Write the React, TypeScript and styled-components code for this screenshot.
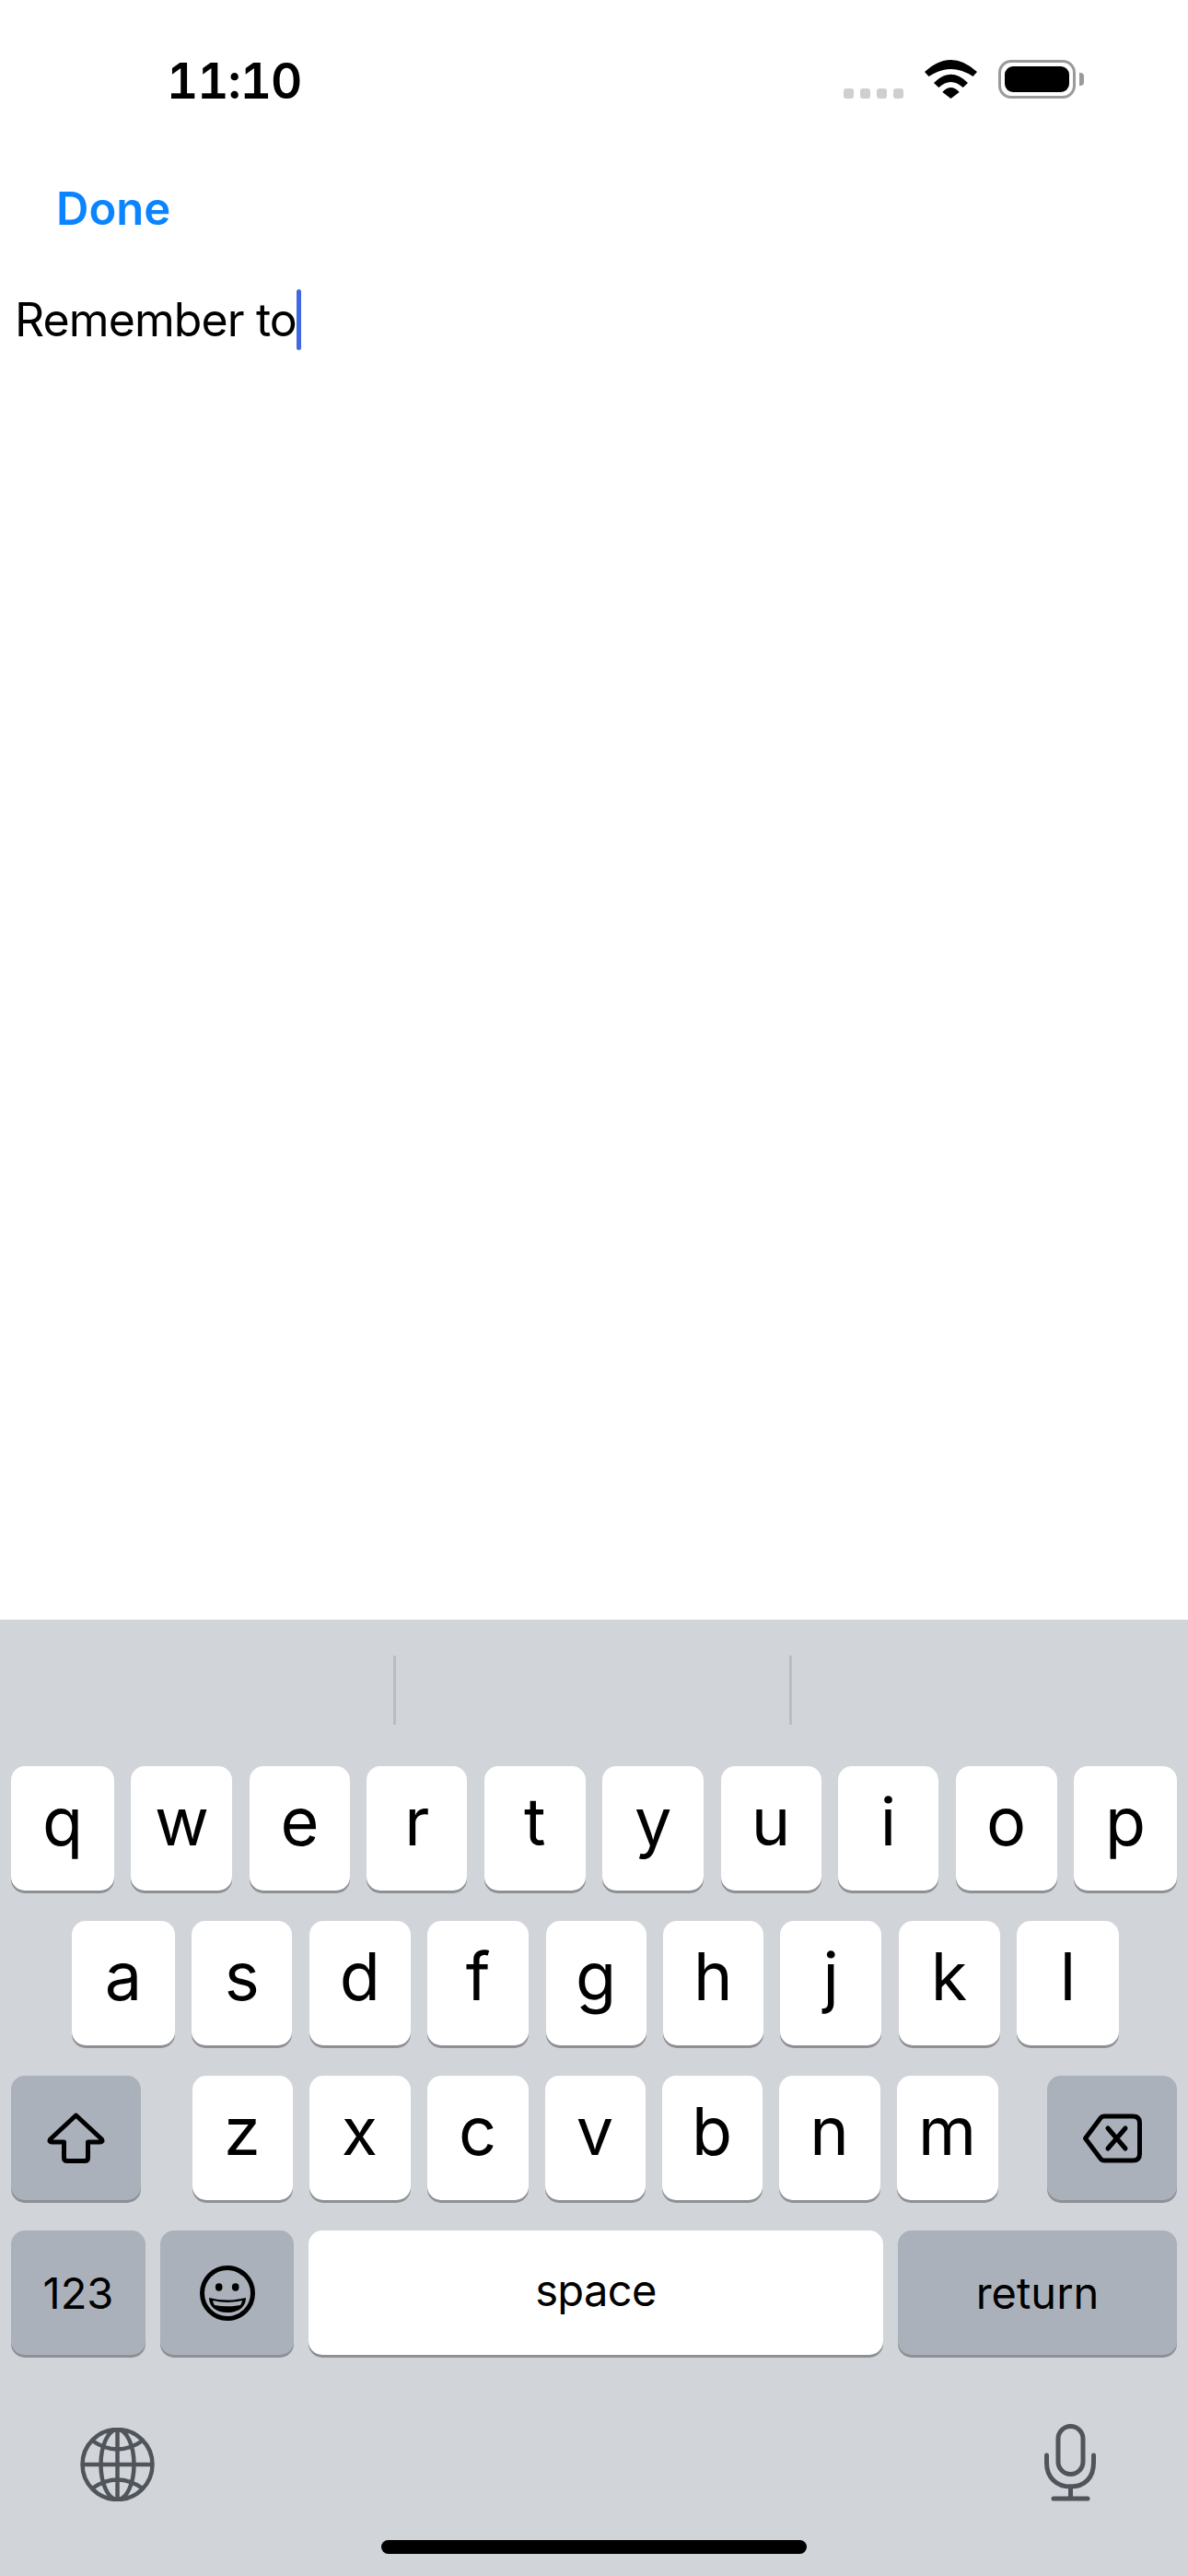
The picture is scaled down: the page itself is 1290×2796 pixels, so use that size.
import React from "react";
import styled, { createGlobalStyle } from "styled-components";

const GlobalStyle = createGlobalStyle`
  html, body { margin: 0; padding: 0; background: #fff; }
  body { font-family: Inter, "Noto Sans", sans-serif; color: #000; }
`;

const Screen = styled.div`
  width: 1290px;
  height: 2796px;
  display: flex;
  flex-direction: column;
  overflow: hidden;
  background: #fff;
`;

const StatusBar = styled.header`
  display: flex;
  align-items: flex-start;
  padding: 62px 122px 0 181px;
`;

const Clock = styled.div`
  font-size: 53px;
  line-height: 52px;
  font-weight: 600;
  font-variant-numeric: tabular-nums;
  letter-spacing: -1px;
`;

const StatusIcons = styled.div`
  margin-left: auto;
  margin-top: 3px;
  display: flex;
  align-items: flex-end;
  gap: 23px;
`;

const SignalDots = styled.div`
  display: flex;
  gap: 7px;
`;

const SignalDot = styled.span`
  width: 11px;
  height: 11px;
  border-radius: 3px;
  background: #cfcfcf;
`;

const Battery = styled.div`
  position: relative;
  box-sizing: border-box;
  width: 84px;
  height: 42px;
  padding: 4px;
  border: 3px solid #9a9a9a;
  border-radius: 14px;
  &::after {
    content: "";
    position: absolute;
    left: 85px;
    top: 11px;
    width: 5px;
    height: 14px;
    border-radius: 0 4px 4px 0;
    background: #9a9a9a;
  }
`;

const BatteryFill = styled.div`
  height: 100%;
  border-radius: 9px;
  background: #000;
`;

const NavBar = styled.nav`
  margin-top: 89px;
  padding-left: 61px;
`;

const DoneButton = styled.span`
  display: block;
  font-size: 49px;
  line-height: 48px;
  font-weight: 600;
  color: #0a84ff;
`;

const Editor = styled.main`
  flex: 1;
  margin-top: 63px;
  padding-left: 16px;
`;

const EditorLine = styled.div`
  display: flex;
  align-items: flex-start;
`;

const EditorText = styled.span`
  padding-top: 8px;
  font-size: 50px;
  line-height: 50px;
  letter-spacing: -0.9px;
`;

const Caret = styled.span`
  width: 5px;
  height: 66px;
  border-radius: 3px;
  background: #3f68e4;
`;

const Keyboard = styled.section`
  height: 1038px;
  box-sizing: border-box;
  padding-top: 39px;
  display: flex;
  flex-direction: column;
  background: #d1d4d9;
`;

const Suggestions = styled.div`
  display: flex;
  height: 75px;
  margin-bottom: 45px;
`;

const Suggestion = styled.div`
  box-sizing: border-box;
  width: 430px;
  border-right: 3px solid #babdc3;
  &:last-child { border-right: none; }
`;

const KeyRows = styled.div`
  display: flex;
  flex-direction: column;
  gap: 33px;
`;

const KeyRow = styled.div<{ $left: number; $right: number }>`
  display: flex;
  justify-content: space-between;
  padding: 0 ${(p) => p.$right}px 0 ${(p) => p.$left}px;
`;

const Key = styled.div<{ $w: number; $special?: boolean }>`
  box-sizing: border-box;
  flex: none;
  width: ${(p) => p.$w}px;
  height: 135px;
  display: flex;
  align-items: center;
  justify-content: center;
  border-radius: 15px;
  background: ${(p) => (p.$special ? "#abb1ba" : "#fff")};
  box-shadow: 0 3px 0 #8e9095;
`;

const Letter = styled.span`
  padding-bottom: 15px;
  font-size: 72px;
  line-height: 72px;
  font-weight: 400;
`;

const KeyLabel = styled.span`
  font-size: 47px;
  line-height: 47px;
  font-weight: 400;
`;

const SpaceLabel = styled(KeyLabel)`
  padding-bottom: 6px;
  letter-spacing: -0.6px;
`;

const LetterGroup = styled.div`
  display: flex;
  gap: 18px;
  margin: 0 53px 0 55px;
`;

const Footer = styled.div`
  display: flex;
  align-items: flex-end;
  justify-content: space-between;
  margin-top: 75px;
  padding: 0 100px 0 87px;
`;

const HomeIndicator = styled.div`
  align-self: center;
  width: 462px;
  height: 15px;
  margin-top: 42px;
  border-radius: 8px;
  background: #000;
`;

const WifiIcon = () => (
  <svg width="57" height="42" viewBox="0 0 57 42" fill="#000">
    <path d="M0 13Q28.5-13 57 13L52.5 18Q28.5 2 4.5 18Z" />
    <path d="M10 25Q28.5 6.4 47 25L41.7 30Q28.5 18 15.3 30Z" />
    <path d="M19.3 35Q28.5 25 37.7 35L28.5 42Z" />
  </svg>
);

const ShiftIcon = () => (
  <svg width="63" height="55" viewBox="0 0 63 55" fill="none" stroke="#000" strokeWidth="5" strokeLinejoin="round">
    <path d="M31.5 3L3.5 29Q2 32 5 32H18.5V49Q18.5 52.5 22 52.5H41Q44.5 52.5 44.5 49V32H58Q61 32 59.5 29Z" />
  </svg>
);

const DeleteIcon = () => (
  <svg width="65" height="54" viewBox="0 0 65 54" fill="none" stroke="#000" strokeWidth="5" strokeLinejoin="round" strokeLinecap="round">
    <path d="M3.5 27L20 5Q21.5 3 24 3H55Q62.5 3 62.5 10V44Q62.5 51 55 51H24Q21.5 51 20 49Z" />
    <path d="M28 16L47 38M47 16L28 38" />
  </svg>
);

const EmojiIcon = () => (
  <svg width="60" height="60" viewBox="0 0 60 60">
    <circle cx="30" cy="30" r="27.5" fill="none" stroke="#000" strokeWidth="5" />
    <ellipse cx="20.7" cy="23.5" rx="3.8" ry="4.2" />
    <ellipse cx="38.7" cy="23.5" rx="3.8" ry="4.2" />
    <path d="M10 35Q30 40 50 35C50 45 42 51 30 51C18 51 10 45 10 35Z" />
    <path d="M14 38Q30 42 46 38Q45.5 41 44 43Q30 45.5 16 43Q14.5 41 14 38Z" fill="#abb1ba" />
  </svg>
);

const GlobeIcon = () => (
  <svg width="81" height="80" viewBox="0 0 81 80" fill="none" stroke="#50555c" strokeWidth="4.5">
    <circle cx="40.5" cy="40" r="38" />
    <ellipse cx="40.5" cy="40" rx="18" ry="38" />
    <path d="M40.5 2V78M2.5 40H78.5" />
    <path d="M13 14Q40.5 33 68 14M13 66Q40.5 47 68 66" />
  </svg>
);

const MicIcon = () => (
  <svg width="56" height="84" viewBox="0 0 56 84" fill="none" stroke="#50555c" strokeWidth="5" strokeLinecap="round">
    <rect x="15" y="2.5" width="27" height="52" rx="13.5" />
    <path d="M2.5 34V42C2.5 58 13 68 28.5 68C44 68 53.5 58 53.5 42V34" />
    <path d="M28.5 68V81M10 81H47" />
  </svg>
);

const rowOne: [string, number][] = [
  ["q", 112], ["w", 110], ["e", 109], ["r", 109], ["t", 110],
  ["y", 110], ["u", 109], ["i", 109], ["o", 110], ["p", 112],
];
const rowTwo: [string, number][] = [
  ["a", 112], ["s", 109], ["d", 110], ["f", 110], ["g", 109],
  ["h", 109], ["j", 110], ["k", 110], ["l", 111],
];
const rowThree: [string, number][] = [
  ["z", 109], ["x", 110], ["c", 110], ["v", 109],
  ["b", 109], ["n", 110], ["m", 110],
];

const LetterKey = ({ item }: { item: [string, number] }) => (
  <Key $w={item[1]}>
    <Letter>{item[0]}</Letter>
  </Key>
);

export default function App() {
  return (
    <>
      <GlobalStyle />
      <Screen>
        <StatusBar>
          <Clock>11:10</Clock>
          <StatusIcons>
            <SignalDots>
              <SignalDot />
              <SignalDot />
              <SignalDot />
              <SignalDot />
            </SignalDots>
            <WifiIcon />
            <Battery>
              <BatteryFill />
            </Battery>
          </StatusIcons>
        </StatusBar>
        <NavBar>
          <DoneButton>Done</DoneButton>
        </NavBar>
        <Editor>
          <EditorLine>
            <EditorText>Remember to</EditorText>
            <Caret />
          </EditorLine>
        </Editor>
        <Keyboard>
          <Suggestions>
            <Suggestion />
            <Suggestion />
            <Suggestion />
          </Suggestions>
          <KeyRows>
            <KeyRow $left={12} $right={12}>
              {rowOne.map((k) => (
                <LetterKey key={k[0]} item={k} />
              ))}
            </KeyRow>
            <KeyRow $left={78} $right={75}>
              {rowTwo.map((k) => (
                <LetterKey key={k[0]} item={k} />
              ))}
            </KeyRow>
            <KeyRow $left={12} $right={12}>
              <Key $w={141} $special>
                <ShiftIcon />
              </Key>
              <LetterGroup>
                {rowThree.map((k) => (
                  <LetterKey key={k[0]} item={k} />
                ))}
              </LetterGroup>
              <Key $w={141} $special>
                <DeleteIcon />
              </Key>
            </KeyRow>
            <KeyRow $left={12} $right={12}>
              <Key $w={146} $special>
                <KeyLabel>123</KeyLabel>
              </Key>
              <Key $w={145} $special>
                <EmojiIcon />
              </Key>
              <Key $w={624}>
                <SpaceLabel>space</SpaceLabel>
              </Key>
              <Key $w={303} $special>
                <KeyLabel>return</KeyLabel>
              </Key>
            </KeyRow>
          </KeyRows>
          <Footer>
            <GlobeIcon />
            <MicIcon />
          </Footer>
          <HomeIndicator />
        </Keyboard>
      </Screen>
    </>
  );
}
